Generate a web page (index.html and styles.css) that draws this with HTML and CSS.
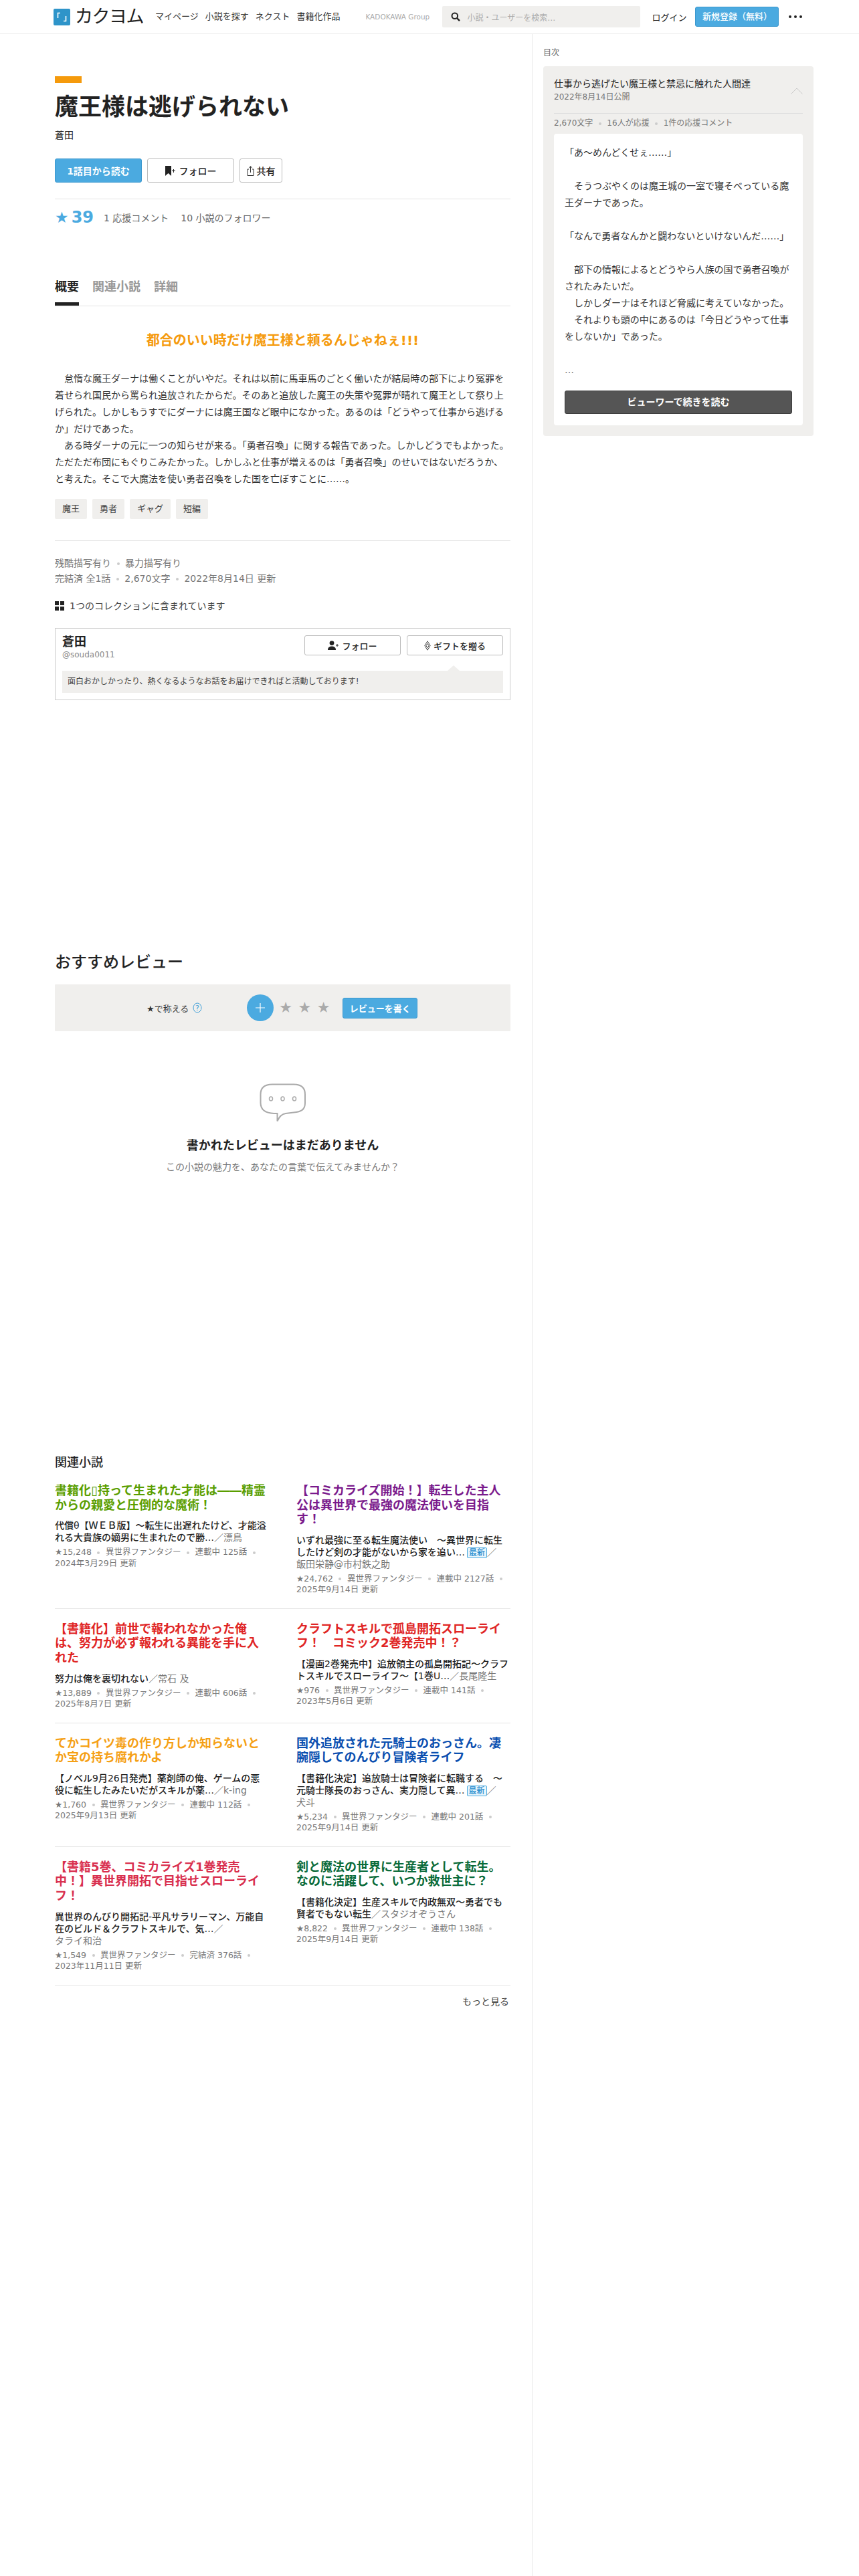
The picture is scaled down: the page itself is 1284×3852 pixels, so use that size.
FILE: index.html
```html
<!DOCTYPE html>
<html lang="ja">
<head>
<meta charset="utf-8">
<title>魔王様は逃げられない - カクヨム</title>
<link rel="stylesheet" href="styles.css">
</head>
<body>
<header class="site-header">
  <svg class="logo-mark" width="25" height="25" viewBox="0 0 25 25" aria-hidden="true"><rect width="25" height="25" rx="2" fill="#2e94c9"/><path d="M6.5 14V6.5H10" fill="none" stroke="#fff" stroke-width="1.6"/><path d="M18.5 11v7.5H15" fill="none" stroke="#fff" stroke-width="1.6"/></svg>
  <span class="wordmark">カクヨム</span>
  <nav class="nav">
    <a>マイページ</a><a>小説を探す</a><a>ネクスト</a><a>書籍化作品</a>
  </nav>
  <span class="group">KADOKAWA Group</span>
  <div class="search">
    <svg width="14" height="14" viewBox="0 0 14 14" aria-hidden="true"><circle cx="5.8" cy="5.8" r="4.3" fill="none" stroke="#222" stroke-width="2"/><path d="M9 9l4 4.2" stroke="#222" stroke-width="2.4"/></svg>
    <span>小説・ユーザーを検索…</span>
  </div>
  <a class="login">ログイン</a>
  <a class="signup">新規登録（無料）</a>
  <span class="dots"><i></i><i></i><i></i></span>
</header>

<div class="layout">
  <main class="main">
    <div class="genre-bar"></div>
    <h1 class="title">魔王様は逃げられない</h1>
    <div class="author">蒼田</div>
    <div class="actions">
      <a class="btn btn-primary btn-read">1話目から読む</a>
      <a class="btn btn-follow">
        <svg width="17" height="15" viewBox="0 0 17 15" aria-hidden="true"><path d="M0 0h9v15L4.5 11 0 15z" fill="#222"/><path d="M12.5 5v5M10 7.5h5" stroke="#222" stroke-width="1"/></svg>
        フォロー</a>
      <a class="btn btn-share">
        <svg width="11" height="15" viewBox="0 0 11 15" aria-hidden="true"><path d="M3 5H1v9.5h9V5H8M5.5 10V1M3 3.2L5.5 .8 8 3.2" fill="none" stroke="#333"/></svg>
        共有</a>
    </div>
    <hr class="rule rule-actions">
    <div class="stats">
      <span class="star-total">★<b>39</b></span>
      <span class="stat">1 応援コメント</span>
      <span class="stat">10 小説のフォロワー</span>
    </div>
    <div class="tabs">
      <a class="tab tab-active">概要</a><a class="tab">関連小説</a><a class="tab">詳細</a>
    </div>
    <p class="catch">都合のいい時だけ魔王様と頼るんじゃねぇ!!!</p>
    <p class="desc">　怠惰な魔王ダーナは働くことがいやだ。それは以前に馬車馬のごとく働いたが結局時の部下により冤罪を着せられ国民から罵られ追放されたからだ。そのあと追放した魔王の失策や冤罪が晴れて魔王として祭り上げられた。しかしもうすでにダーナには魔王国など眼中になかった。あるのは「どうやって仕事から逃げるか」だけであった。<br>　ある時ダーナの元に一つの知らせが来る。「勇者召喚」に関する報告であった。しかしどうでもよかった。ただただ布団にもぐりこみたかった。しかしふと仕事が増えるのは「勇者召喚」のせいではないだろうか、と考えた。そこで大魔法を使い勇者召喚をした国を亡ぼすことに……。</p>
    <ul class="tags">
      <li>魔王</li><li>勇者</li><li>ギャグ</li><li>短編</li>
    </ul>
    <hr class="rule rule-tags">
    <div class="info">
      <div>残酷描写有り<i class="sep"></i>暴力描写有り</div>
      <div>完結済 全1話<i class="sep"></i>2,670文字<i class="sep"></i>2022年8月14日 更新</div>
    </div>
    <div class="collection">
      <span class="grid-icon"><i></i><i></i><i></i><i></i></span>
      1つのコレクションに含まれています
    </div>
    <section class="author-box">
      <div class="author-top">
        <div>
          <div class="author-name">蒼田</div>
          <div class="author-id">@souda0011</div>
        </div>
        <div class="author-actions">
          <a class="btn btn-small">
            <svg width="17" height="14" viewBox="0 0 17 14" aria-hidden="true"><circle cx="6" cy="3.6" r="3.4" fill="#222"/><path d="M0 14c0-4 2.5-5.5 6-5.5s6 1.5 6 5.5z" fill="#222"/><path d="M14 5v4M12 7h4" stroke="#222"/></svg>
            フォロー</a>
          <a class="btn btn-small">
            <svg width="10" height="15" viewBox="0 0 10 15" aria-hidden="true"><path d="M5 .8l4.2 6.7L5 14.2.8 7.500z" fill="none" stroke="#444"/><path d="M5 4.300l2.200 3.200L5 10.700 2.800 7.500z" fill="none" stroke="#444"/></svg>
            ギフトを贈る</a>
        </div>
      </div>
      <p class="author-intro">面白おかしかったり、熱くなるようなお話をお届けできればと活動しております!</p>
    </section>

    <h2 class="reviews-heading">おすすめレビュー</h2>
    <div class="rate-bar">
      <span class="rate-label">★で称える</span>
      <svg class="rate-help" width="14" height="16" viewBox="0 0 14 16" aria-hidden="true"><ellipse cx="7" cy="8" rx="6" ry="7" fill="none" stroke="#3f9fd8"/><text x="7" y="12" text-anchor="middle" font-size="11" fill="#3f9fd8">?</text></svg>
      <span class="rate-plus">
        <svg width="14" height="14" viewBox="0 0 14 14" aria-hidden="true"><path d="M7 0v14M0 7h14" stroke="#fff" stroke-width="1.200"/></svg>
      </span>
      <span class="rate-stars">★★★</span>
      <a class="btn btn-primary btn-review">レビューを書く</a>
    </div>
    <svg class="bubble" width="70" height="58" viewBox="0 0 70 58" aria-hidden="true"><path d="M19 1.500h32c11 0 17 5 17 15v13c0 10-6 13-17 14l-12 1.500q-8 1-12.500 11.500l0-11.500h-5C9 44.500 1.500 40 1.500 29V16.500C1.500 6.500 8 1.500 19 1.500z" fill="none" stroke="#aaa" stroke-width="2"/><ellipse cx="17" cy="23" rx="2.500" ry="3" fill="none" stroke="#aaa" stroke-width="1.500"/><ellipse cx="34.500" cy="23" rx="2.500" ry="3" fill="none" stroke="#aaa" stroke-width="1.500"/><ellipse cx="52" cy="23" rx="2.500" ry="3" fill="none" stroke="#aaa" stroke-width="1.500"/></svg>
    <h3 class="empty-title">書かれたレビューはまだありません</h3>
    <p class="empty-sub">この小説の魅力を、あなたの言葉で伝えてみませんか？</p>

    <h2 class="related-heading">関連小説</h2>
    <div class="related">
      <article class="work">
        <h3 class="work-catch c-green">書籍化▯持って生まれた才能は――精霊からの親愛と圧倒的な魔術！</h3>
        <p class="work-title">代償θ【ＷＥＢ版】～転生に出遅れたけど、才能溢れる大貴族の嫡男に生まれたので勝…<span class="work-author">／<span class="nowrap">漂鳥</span></span></p>
        <p class="work-meta">★15,248<i class="sep"></i>異世界ファンタジー<i class="sep"></i>連載中 125話<i class="sep"></i><span class="nowrap">2024年3月29日 更新</span></p>
      </article>
      <article class="work">
        <h3 class="work-catch c-purple">【コミカライズ開始！】転生した主人公は異世界で最強の魔法使いを目指す！</h3>
        <p class="work-title">いずれ最強に至る転生魔法使い　～異世界に転生したけど剣の才能がないから家を追い…<span class="badge">最新</span><span class="work-author">／<span class="nowrap">飯田栄静@市村鉄之助</span></span></p>
        <p class="work-meta">★24,762<i class="sep"></i>異世界ファンタジー<i class="sep"></i>連載中 2127話<i class="sep"></i><span class="nowrap">2025年9月14日 更新</span></p>
      </article>
      <article class="work">
        <h3 class="work-catch c-red">【書籍化】前世で報われなかった俺は、努力が必ず報われる異能を手に入れた</h3>
        <p class="work-title">努力は俺を裏切れない<span class="work-author">／<span class="nowrap">常石 及</span></span></p>
        <p class="work-meta">★13,889<i class="sep"></i>異世界ファンタジー<i class="sep"></i>連載中 606話<i class="sep"></i><span class="nowrap">2025年8月7日 更新</span></p>
      </article>
      <article class="work">
        <h3 class="work-catch c-red">クラフトスキルで孤島開拓スローライフ！　コミック2巻発売中！？</h3>
        <p class="work-title">【漫画2巻発売中】追放領主の孤島開拓記～クラフトスキルでスローライフ～【1巻U…<span class="work-author">／<span class="nowrap">長尾隆生</span></span></p>
        <p class="work-meta">★976<i class="sep"></i>異世界ファンタジー<i class="sep"></i>連載中 141話<i class="sep"></i><span class="nowrap">2023年5月6日 更新</span></p>
      </article>
      <article class="work">
        <h3 class="work-catch c-orange">てかコイツ毒の作り方しか知らないとか宝の持ち腐れかよ</h3>
        <p class="work-title">【ノベル9月26日発売】薬剤師の俺、ゲームの悪役に転生したみたいだがスキルが薬…<span class="work-author">／<span class="nowrap">k-ing</span></span></p>
        <p class="work-meta">★1,760<i class="sep"></i>異世界ファンタジー<i class="sep"></i>連載中 112話<i class="sep"></i><span class="nowrap">2025年9月13日 更新</span></p>
      </article>
      <article class="work">
        <h3 class="work-catch c-blue">国外追放された元騎士のおっさん。凄腕隠してのんびり冒険者ライフ</h3>
        <p class="work-title">【書籍化決定】追放騎士は冒険者に転職する　～元騎士隊長のおっさん、実力隠して異…<span class="badge">最新</span><span class="work-author">／<span class="nowrap">犬斗</span></span></p>
        <p class="work-meta">★5,234<i class="sep"></i>異世界ファンタジー<i class="sep"></i>連載中 201話<i class="sep"></i><span class="nowrap">2025年9月14日 更新</span></p>
      </article>
      <article class="work">
        <h3 class="work-catch c-crimson">【書籍5巻、コミカライズ1巻発売中！】異世界開拓で目指せスローライフ！</h3>
        <p class="work-title">異世界のんびり開拓記-平凡サラリーマン、万能自在のビルド＆クラフトスキルで、気…<span class="work-author">／<span class="nowrap">タライ和治</span></span></p>
        <p class="work-meta">★1,549<i class="sep"></i>異世界ファンタジー<i class="sep"></i>完結済 376話<i class="sep"></i><span class="nowrap">2023年11月11日 更新</span></p>
      </article>
      <article class="work">
        <h3 class="work-catch c-forest">剣と魔法の世界に生産者として転生。なのに活躍して、いつか救世主に？</h3>
        <p class="work-title">【書籍化決定】生産スキルで内政無双～勇者でも賢者でもない転生<span class="work-author">／<span class="nowrap">スタジオぞうさん</span></span></p>
        <p class="work-meta">★8,822<i class="sep"></i>異世界ファンタジー<i class="sep"></i>連載中 138話<i class="sep"></i><span class="nowrap">2025年9月14日 更新</span></p>
      </article>
    </div>
    <a class="more">もっと見る</a>
  </main>

  <aside class="aside">
    <div class="toc-label">目次</div>
    <section class="panel">
      <div class="panel-head">
        <div>
          <div class="episode-title">仕事から逃げたい魔王様と禁忌に触れた人間達</div>
          <div class="episode-date">2022年8月14日公開</div>
        </div>
        <svg class="chevron" width="18" height="10" viewBox="0 0 18 10" aria-hidden="true"><path d="M.5 9.500L9 1l8.500 8.500" fill="none" stroke="#c8c8c8"/></svg>
      </div>
      <div class="episode-stats">2,670文字<i class="sep"></i>16人が応援<i class="sep"></i>1件の応援コメント</div>
      <div class="preview">
        <p class="preview-text">「あ～めんどくせぇ……」<br><br>　そうつぶやくのは魔王城の一室で寝そべっている魔王ダーナであった。<br><br>「なんで勇者なんかと闘わないといけないんだ……」<br><br>　部下の情報によるとどうやら人族の国で勇者召喚がされたみたいだ。<br>　しかしダーナはそれほど脅威に考えていなかった。<br>　それよりも頭の中にあるのは「今日どうやって仕事をしないか」であった。<br><br><span class="ellipsis">…</span></p>
        <a class="btn-viewer">ビューワーで続きを読む</a>
      </div>
    </section>
  </aside>
</div>
</body>
</html>
```

FILE: styles.css
```css
* { box-sizing: border-box; }
html, body { margin: 0; padding: 0; }
body {
  font-family: "DejaVu Sans", "Noto Sans CJK JP", sans-serif;
  color: #222;
  background: #fff;
  height: 3852px;
  overflow: hidden;
}
h1, h2, h3, p, ul { margin: 0; padding: 0; }
i { font-style: normal; }

.site-header {
  height: 51px;
  display: flex;
  align-items: center;
  padding-left: 80px;
  border-bottom: 1px solid #ececec;
}
.logo-mark { flex: none; }
.wordmark {
  width: 100px;
  margin-left: 7px;
  font-size: 27px;
  line-height: 30px;
  letter-spacing: -1.500px;
  white-space: nowrap;
  color: #222;
}
.nav { display: flex; gap: 10px; margin-left: 20px; font-size: 13px; line-height: 20px; color: #333; }
.group { margin-left: 38px; width: 94px; font-size: 10.500px; color: #aaa; white-space: nowrap; }
.search {
  margin-left: 21px;
  width: 296px;
  height: 32px;
  background: #f0efed;
  border-radius: 2px;
  display: flex;
  align-items: center;
  gap: 10px;
  padding-left: 13px;
  font-size: 12px;
  color: #aaa;
}
.login { margin-left: 17px; font-size: 13px; }
.signup {
  margin-left: 13px;
  width: 125px;
  height: 30px;
  line-height: 28px;
  text-align: center;
  font-size: 13px;
  font-weight: 500;
  color: #fff;
  background: #4baae0;
  border: 1px solid #3b98cf;
  border-radius: 3px;
}
.dots { display: flex; gap: 4px; margin-left: 15px; }
.dots i { width: 4px; height: 4px; border-radius: 50%; background: #222; }

.layout { display: flex; min-height: 3801px; }
.main { width: 795px; flex: none; padding: 0 32px 0 82px; }
.aside { flex: 1; border-left: 1px solid #e8e8e8; padding-left: 16px; }

.genre-bar { width: 40px; height: 10px; margin-top: 63px; background: #f59a0c; }
.title { margin-top: 14px; font-size: 35px; line-height: 44px; font-weight: 700; }
.author { margin-top: 10px; font-size: 14px; line-height: 20px; }

.actions { display: flex; gap: 8px; margin-top: 25px; }
.btn {
  display: flex;
  align-items: center;
  justify-content: center;
  gap: 4px;
  height: 36px;
  font-size: 14px;
  font-weight: 500;
  background: #fff;
  border: 1px solid #bbb;
  border-radius: 3px;
}
.btn-primary { color: #fff; background: #4baae0; border-color: #3b98cf; font-weight: 700; }
.btn-read { width: 130px; }
.btn-follow { width: 130px; }
.btn-share { width: 64px; }

.rule { margin: 0; border: 0; height: 1px; background: #e4e4e4; }
.rule-actions { margin-top: 24px; }
.stats { display: flex; align-items: center; margin-top: 9px; height: 36px; }
.star-total { font-size: 23px; line-height: 36px; color: #4baae0; width: 73px; white-space: nowrap; }
.star-total b { margin-left: 4px; font-size: 24px; font-weight: 700; }
.stat { font-size: 14px; color: #666; margin-right: 18px; }

.tabs { display: flex; gap: 20px; margin-top: 73px; border-bottom: 1px solid #e4e4e4; }
.tab {
  font-size: 18px;
  line-height: 26px;
  font-weight: 700;
  color: #999;
  padding-bottom: 10px;
  border-bottom: 5px solid transparent;
}
.tab-active { color: #222; border-bottom-color: #222; }

.catch { margin-top: 36px; text-align: center; font-size: 20px; line-height: 30px; font-weight: 700; color: #f59a0c; }
.desc { margin-top: 30px; font-size: 14px; line-height: 25px; color: #333; }

.tags { list-style: none; display: flex; gap: 8px; margin-top: 17px; }
.tags li { height: 30px; line-height: 30px; padding: 0 11px; font-size: 13px; color: #444; background: #f0efed; border-radius: 2px; }
.rule-tags { margin-top: 32px; }

.info { margin-top: 22px; font-size: 14px; line-height: 23px; color: #777; }
.sep {
  display: inline-block;
  width: 4px;
  height: 4px;
  margin: 0 8.500px;
  border-radius: 50%;
  background: #ccc;
  vertical-align: middle;
}
.collection { display: flex; align-items: center; gap: 8px; margin-top: 19px; font-size: 14px; line-height: 20px; color: #444; }
.grid-icon { display: grid; grid-template-columns: 6px 6px; gap: 2px; }
.grid-icon i { width: 6px; height: 6px; background: #222; }

.author-box { margin-top: 23px; height: 108px; border: 1px solid #ccc; padding: 10px 10px 0; }
.author-top { display: flex; justify-content: space-between; height: 53px; }
.author-name { font-size: 18px; line-height: 20px; font-weight: 700; }
.author-id { font-size: 12px; line-height: 18px; color: #888; }
.author-actions { display: flex; gap: 9px; }
.btn-small { width: 144px; height: 30px; font-size: 13px; }
.author-intro {
  position: relative;
  height: 33px;
  padding-left: 8px;
  font-size: 12px;
  line-height: 33px;
  color: #444;
  background: #f0efed;
}
.author-intro::before {
  content: "";
  position: absolute;
  right: 65px;
  top: -8px;
  border-left: 9px solid transparent;
  border-right: 9px solid transparent;
  border-bottom: 8px solid #f0efed;
}

.reviews-heading { margin-top: 375px; font-size: 24px; line-height: 34px; font-weight: 500; }
.rate-bar {
  margin-top: 16px;
  height: 70px;
  background: #f0efed;
  display: flex;
  align-items: center;
  padding-left: 137px;
  border-radius: 1px;
}
.rate-label { font-size: 13px; color: #333; }
.rate-help { margin-left: 6px; }
.rate-plus {
  width: 40px;
  height: 40px;
  margin-left: 67px;
  border-radius: 50%;
  background: #4baae0;
  display: flex;
  align-items: center;
  justify-content: center;
}
.rate-stars { margin-left: 8px; width: 95px; font-size: 22px; line-height: 40px; letter-spacing: 8.500px; color: #aaa; white-space: nowrap; }
.btn-review { width: 112px; height: 31px; font-size: 13px; }

.bubble { display: block; margin: 78px auto 0; }
.empty-title { margin-top: 22px; text-align: center; font-size: 18px; line-height: 26px; font-weight: 700; }
.empty-sub { margin-top: 8px; text-align: center; font-size: 14px; line-height: 22px; color: #777; }

.related-heading { margin-top: 418px; font-size: 18px; line-height: 26px; font-weight: 500; }
.related { display: grid; grid-template-columns: 361px 320px; margin-top: -1px; }
.work { padding: 19px 0; border-bottom: 1px solid #e4e4e4; }
.work-catch { width: 320px; font-size: 18px; line-height: 21.600px; font-weight: 700; }
.work-title { width: 320px; margin-top: 11px; font-size: 14px; line-height: 18px; font-weight: 500; }
.work-author { font-weight: 400; color: #777; }
.work-meta { width: 320px; margin-top: 5px; font-size: 12.500px; line-height: 16.500px; color: #777; }
.nowrap { white-space: nowrap; }
.badge {
  display: inline-block;
  margin-left: 3px;
  padding: 0 2px;
  font-size: 12px;
  line-height: 14px;
  color: #2a8fd0;
  background: #e8f5fc;
  border: 1px solid #4baae0;
  border-radius: 2px;
}
.c-green { color: #5a9e00; }
.c-purple { color: #7a1a8c; }
.c-red { color: #e02525; }
.c-orange { color: #f5a014; }
.c-blue { color: #0a4fb0; }
.c-crimson { color: #d9304f; }
.c-forest { color: #0a6b3a; }

.more { display: block; margin-top: 14px; padding-right: 2px; text-align: right; font-size: 14px; line-height: 20px; color: #444; }

.toc-label { margin-top: 19px; font-size: 12px; line-height: 18px; color: #666; }
.panel { width: 404px; margin-top: 11px; padding: 16px; background: #f0efed; border-radius: 4px; }
.panel-head { display: flex; justify-content: space-between; align-items: center; padding-bottom: 15px; border-bottom: 1px solid #ddd; }
.episode-title { font-size: 14px; line-height: 20px; color: #222; }
.episode-date { margin-top: 1px; font-size: 12px; line-height: 18px; color: #777; }
.chevron { margin-top: 3px; }
.episode-stats { margin-top: 5px; font-size: 12px; line-height: 18px; color: #777; }
.preview { margin-top: 7px; padding: 16px 16px 17px; background: #fff; border-radius: 4px; }
.preview-text { font-size: 14px; line-height: 25px; color: #333; }
.ellipsis { color: #777; }
.btn-viewer {
  display: block;
  margin-top: 18px;
  height: 35px;
  line-height: 33px;
  text-align: center;
  font-size: 14px;
  font-weight: 700;
  color: #fff;
  background: #555;
  border: 1px solid #3a3a3a;
  border-radius: 3px;
}
```
